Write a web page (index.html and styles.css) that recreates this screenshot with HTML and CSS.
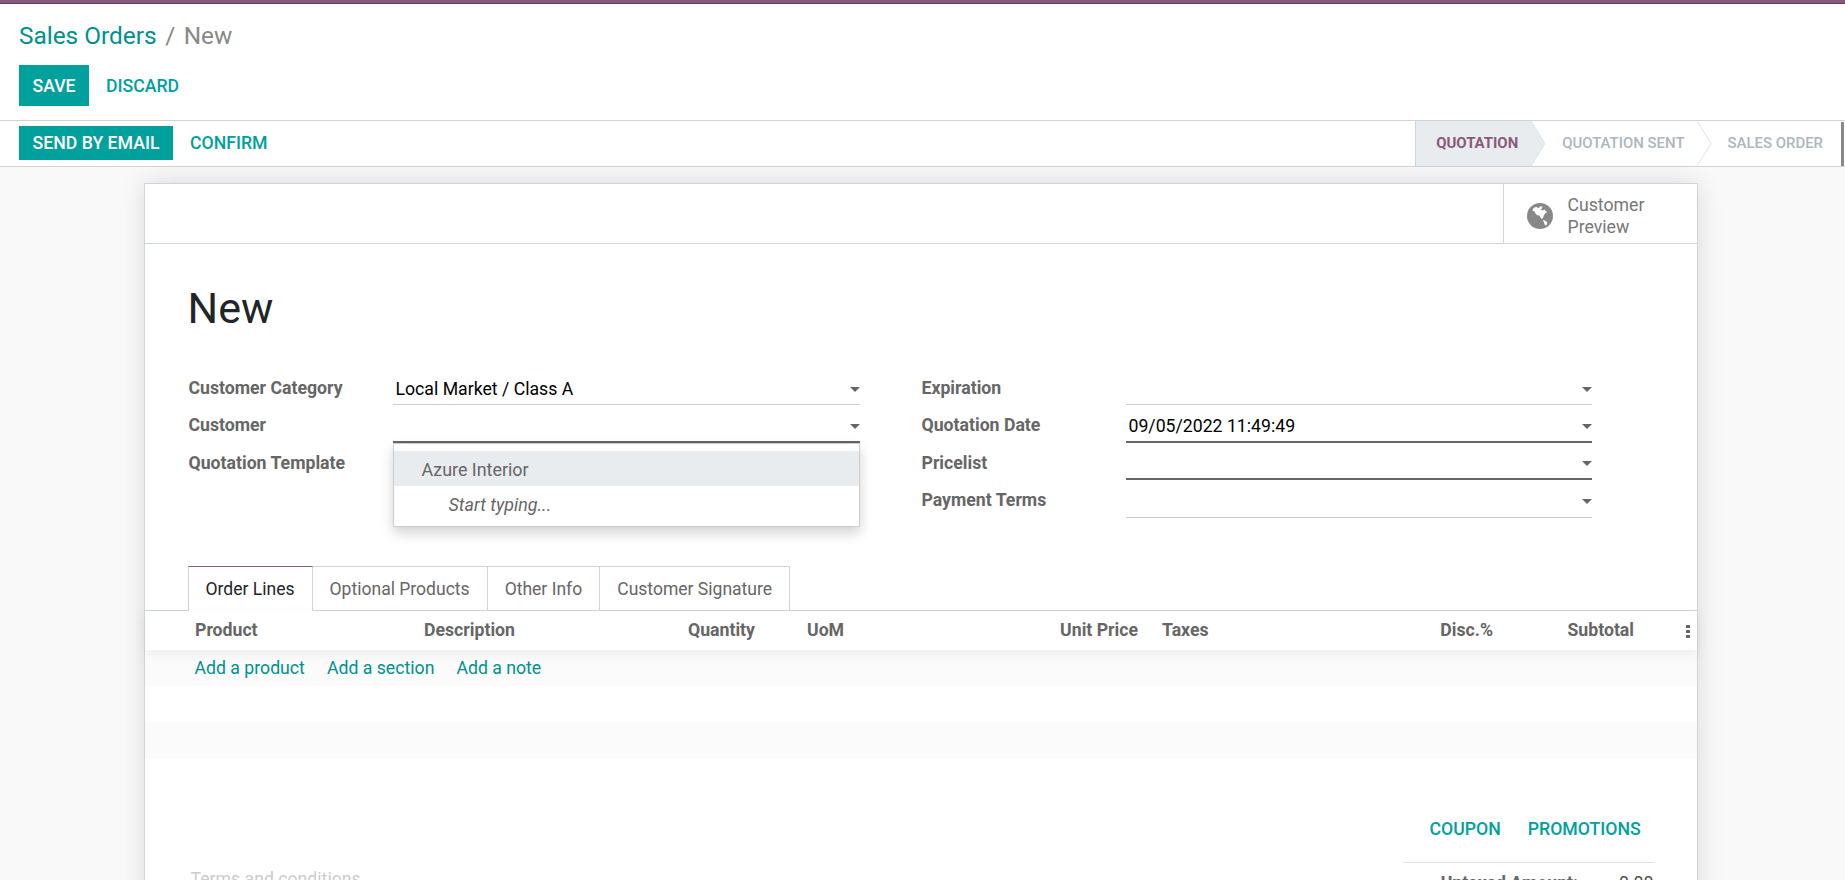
FILE: index.html
```html
<!DOCTYPE html>
<html lang="en">
<head>
<meta charset="utf-8">
<title>Sales Orders / New</title>
<link rel="stylesheet" href="styles.css">
</head>
<body>
<div class="topbar"></div>
<header class="control-panel">
  <div class="breadcrumb"><a class="crumb-link">Sales Orders</a><span class="crumb-sep">/</span><span class="crumb-current">New</span></div>
  <div class="cp-buttons"><button class="btn btn-primary btn-save">SAVE</button><button class="btn btn-link">DISCARD</button></div>
</header>
<div class="statusbar">
  <div class="status-actions"><button class="btn btn-primary btn-email">SEND BY EMAIL</button><button class="btn btn-link">CONFIRM</button></div>
  <div class="status-steps">
    <span class="step step-active">QUOTATION</span>
    <svg class="chev" viewBox="0 0 15 45" width="15" height="45"><polygon points="0,0 14,22.5 0,45" fill="#e9ecef"/><polyline points="0,0 14,22.5 0,45" fill="none" stroke="#dee2e6"/></svg>
    <span class="step">QUOTATION SENT</span>
    <svg class="chev" viewBox="0 0 15 45" width="15" height="45"><polyline points="0,0 14,22.5 0,45" fill="none" stroke="#dee2e6"/></svg>
    <span class="step step-last">SALES ORDER</span>
  </div>
  <div class="scroll-thumb"></div>
</div>
<main class="content">
  <section class="card">
    <div class="button-box">
      <div class="stat-button">
        <svg class="globe" viewBox="0 0 26 26" width="26" height="26">
          <circle cx="13" cy="13" r="13" fill="#888"/>
          <path d="M6.5 5 L9.5 3.8 L11 5.2 L13 3.6 L15.5 3.4 L15 5.6 L13.5 6.4 L15.5 7.6 L17.5 6.6 L19 8.4 L20.5 9 L18 10.6 L16.8 12.4 L16.2 14.6 L15 16 L13.6 14.8 L12.6 12.6 L10.4 12.2 L8.6 10.8 L7.6 8.4 L5.4 7.6 Z" fill="#fff"/>
          <path d="M15.8 17 L18 17.6 L20.4 19.6 L19.2 22.8 L17.6 21.4 L16.8 19 Z" fill="#fff"/>
        </svg>
        <span class="stat-text">Customer<br>Preview</span>
      </div>
    </div>
    <div class="sheet">
      <h1 class="title">New</h1>
      <div class="form-grid">
        <label class="field-label">Customer Category</label>
        <div class="input"><span>Local Market / Class A</span><i class="caret"></i></div>
        <span></span>
        <label class="field-label">Expiration</label>
        <div class="input"><span></span><i class="caret"></i></div>

        <label class="field-label">Customer</label>
        <div class="input input-focus"><span></span><i class="caret"></i>
          <div class="dropdown">
            <div class="dd-item dd-active">Azure Interior</div>
            <div class="dd-item dd-hint">Start typing...</div>
          </div>
        </div>
        <span></span>
        <label class="field-label">Quotation Date</label>
        <div class="input input-focus"><span>09/05/2022 11:49:49</span><i class="caret"></i></div>

        <label class="field-label">Quotation Template</label>
        <div class="input"><span></span><i class="caret"></i></div>
        <span></span>
        <label class="field-label">Pricelist</label>
        <div class="input input-focus"><span></span><i class="caret"></i></div>

        <span></span>
        <span></span>
        <span></span>
        <label class="field-label">Payment Terms</label>
        <div class="input"><span></span><i class="caret"></i></div>
      </div>
    </div>
    <nav class="tabs">
      <a class="tab tab-active">Order Lines</a><a class="tab">Optional Products</a><a class="tab">Other Info</a><a class="tab">Customer Signature</a>
    </nav>
    <div class="table-head">
      <span>Product</span>
      <span>Description</span>
      <span>Quantity</span>
      <span>UoM</span>
      <span class="right">Unit Price</span>
      <span class="taxes">Taxes</span>
      <span class="right">Disc.%</span>
      <span class="right">Subtotal</span>
      <span class="dots"><i></i><i></i><i></i></span>
    </div>
    <div class="row-add"><a>Add a product</a><a>Add a section</a><a>Add a note</a></div>
    <div class="row-blank"></div>
    <div class="row-stripe"></div>
    <div class="footer-block">
      <div class="terms">Terms and conditions</div>
      <div class="totals">
        <div class="promo"><button class="btn btn-link">COUPON</button><button class="btn btn-link">PROMOTIONS</button></div>
        <div class="total-row"><span class="total-label">Untaxed Amount:</span><span class="total-value">0.00</span></div>
      </div>
    </div>
  </section>
</main>
</body>
</html>
```
FILE: styles.css
```css
* { box-sizing: border-box; }
html, body { margin: 0; height: 880px; overflow: hidden; }
body {
  font-family: Roboto, "Noto Sans", sans-serif;
  font-size: 17.68px;
  color: #4c4c4c;
  background: #f9f9f9;
}
.topbar { height: 4px; background: #875a7b; border-bottom: 1px solid #5d3f55; }
.control-panel {
  height: 117px;
  background: #fff;
  border-bottom: 1px solid #ced4da;
  padding: 0 19px;
}
.breadcrumb { height: 61px; padding-top: 18px; font-size: 24.4px; line-height: 28px; }
.crumb-link { color: #00908d; }
.crumb-sep { color: #888; margin: 0 8.5px; }
.crumb-current { color: #888; }
.cp-buttons { display: flex; }
.btn {
  font-family: inherit;
  font-size: 17.68px;
  font-weight: 500;
  border: 0;
  padding: 0;
  background: none;
  white-space: nowrap;
}
.btn-primary { background: #00a09d; color: #fff; }
.btn-link { color: #00a09d; }
.btn-save { width: 70px; height: 41px; margin-right: 17px; }
.btn-email { width: 154px; height: 34px; margin-right: 17px; }
.statusbar {
  height: 46px;
  background: #fff;
  border-bottom: 1px solid #ced4da;
  padding-left: 19px;
  display: flex;
  justify-content: space-between;
  align-items: center;
}
.status-actions { display: flex; margin-bottom: 2px; }
.status-steps { display: flex; height: 45px; align-items: stretch; margin-right: 18px; margin-left: auto; }
.step {
  font-size: 14.95px;
  font-weight: 500;
  color: #adb5bd;
  display: flex;
  align-items: center;
  padding: 0 12px 2px 16px;
}
.step-active {
  width: 116px;
  padding: 0 0 2px 20px;
  color: #875a7b;
  background: #e9ecef;
  border-left: 1px solid #ced4da;
  font-weight: 700;
}
.step-last { padding-right: 0; }
.chev { display: block; flex: none; }
.scroll-thumb { width: 3px; height: 44px; margin-right: 1px; background: #888; align-self: flex-end; }
.content { padding: 16px 4px 0 0; }
.card {
  width: 1554px;
  margin: 0 auto;
  background: #fff;
  border: 1px solid #ced4da;
  box-shadow: 0 0 24px rgba(0, 0, 0, .13);
  height: 800px;
}
.button-box {
  height: 60px;
  border-bottom: 1px solid #ced4da;
  display: flex;
  justify-content: flex-end;
}
.stat-button {
  width: 194px;
  border-left: 1px solid #ced4da;
  display: flex;
  align-items: center;
  padding: 4px 0 0 23px;
  color: #777;
  font-weight: 400;
}
.globe { margin-right: 15px; }
.stat-text { line-height: 22px; }
.sheet { padding: 38px 43px 0 44px; height: 322px; }
.title { margin: 0 0 0 -1px; font-size: 43px; font-weight: 400; line-height: 52px; color: #212529; }
.form-grid {
  margin-top: 34px;
  display: grid;
  grid-template-columns: 204px 467px 62px 204px 466px;
  grid-template-rows: 37px 38px 37px 38px;
}
.field-label { font-weight: 700; color: #666; line-height: 24px; padding-top: 8px; }
.input {
  position: relative;
  display: flex;
  align-items: center;
  justify-content: space-between;
  padding: 6px 0 0 3px;
  border-bottom: 1px solid #ccc;
  color: #000;
}
.input-focus { border-bottom: 2px solid #666; }
.caret {
  width: 0;
  height: 0;
  border-left: 5px solid transparent;
  border-right: 5px solid transparent;
  border-top: 5px solid #666;
}
.dropdown {
  position: absolute;
  left: 0;
  right: 0;
  top: calc(100% + 2px);
  height: 84px;
  padding-top: 7px;
  background: #fff;
  border: 1px solid #ccc;
  box-shadow: 0 6px 12px rgba(0, 0, 0, .18);
  font-size: 17.9px;
  z-index: 5;
}
.dd-item { height: 35px; display: flex; align-items: center; color: #666; padding-top: 1px; }
.dd-active { background: #e9ecef; padding-left: 28px; }
.dd-hint { font-style: italic; padding-left: 55px; }
.tabs {
  padding-left: 43px;
  display: flex;
  height: 45px;
  border-bottom: 1px solid #ced4da;
  font-size: 17.55px;
}
.tab {
  height: 44px;
  display: flex;
  align-items: center;
  padding: 0 17px;
  border: 1px solid #ced4da;
  border-bottom: 0;
  border-left: 0;
  color: #666;
}
.tab-active {
  height: 45px;
  background: #fff;
  color: #212529;
  border-left: 1px solid #ced4da;
  border-top: 1px solid #875a7b;
}
.table-head {
  height: 39px;
  padding: 0 0 2px 50.5px;
  display: grid;
  grid-template-columns: 229px 264px 119px 153px 178px 162px 193px 141px 1fr;
  align-items: center;
  font-weight: 700;
  color: #666;
  position: relative;
  z-index: 1;
  background: #fff;
  box-shadow: 0 4px 12px rgba(0, 0, 0, .06);
}
.right { text-align: right; }
.taxes { padding-left: 24px; }
.dots { display: flex; flex-direction: column; align-items: flex-end; gap: 2px; padding: 4px 7px 0 0; }
.dots i { width: 4px; height: 3px; background: #666; display: block; }
.row-add { height: 36px; background: #fbfbfb; padding-left: 50px; display: flex; align-items: center; gap: 22px; color: #00908d; }
.row-blank { height: 36px; background: #fff; }
.row-stripe { height: 37px; background: #fbfbfb; }
.footer-block { display: flex; justify-content: space-between; padding: 0 43px 0 46px; }
.terms { color: #ccc; padding-top: 108px; line-height: 24px; }
.totals { width: 251px; }
.promo {
  height: 104px;
  padding-top: 59px;
  padding-left: 27px;
  display: flex;
  align-items: flex-start;
  gap: 27px;
  border-bottom: 1px solid #dee2e6;
}
.promo .btn { line-height: 22px; }
.total-row { display: flex; justify-content: flex-end; gap: 41px; padding-top: 8px; line-height: 24px; }
.total-label { font-weight: 700; color: #666; }
```
